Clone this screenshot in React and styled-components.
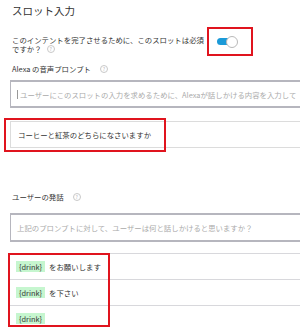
import React from 'react'
import styled, { createGlobalStyle } from 'styled-components'

const GlobalStyle = createGlobalStyle`
  html, body {
    margin: 0;
    padding: 0;
    background: #fff;
    overflow: hidden;
  }
  body {
    font-family: "Noto Sans CJK JP", "Noto Sans", sans-serif;
    color: #333;
  }
`

const Page = styled.div`
  width: 420px;
  padding: 4px 0 0 10px;
  font-size: 7.4px;
`

const Title = styled.h2`
  margin: 0 0 0 2px;
  font-size: 10.5px;
  line-height: 14px;
  font-weight: 400;
  color: #333;
`

const RequiredRow = styled.div`
  display: flex;
  align-items: flex-start;
  margin-top: 9px;
`

const Question = styled.div`
  width: 195px;
  margin: 9px 0 0 2px;
  line-height: 8.5px;
  color: #333;
`

const Frame = styled.div`
  box-sizing: border-box;
  border: 2px solid #e0141e;
`

const ToggleFrame = styled(Frame)`
  width: 46px;
  height: 29px;
  display: flex;
  align-items: center;
  padding-left: 8px;
`

const Toggle = styled.div`
  position: relative;
  width: 21px;
  height: 12px;
  display: flex;
  align-items: center;
`

const Track = styled.div`
  width: 15px;
  height: 7px;
  border-radius: 4px;
  background: #1b9ad8;
`

const Knob = styled.div`
  position: absolute;
  right: 0;
  top: 0;
  box-sizing: border-box;
  width: 12px;
  height: 12px;
  border-radius: 50%;
  background: #fff;
  border: 1px solid #b9b9b9;
`

const Label = styled.div`
  display: flex;
  align-items: center;
  gap: 9px;
  margin: ${p => p.$top}px 0 0 2px;
  line-height: 10px;
  color: #333;
`

const Help = styled.span`
  display: inline-block;
  box-sizing: border-box;
  width: 8px;
  height: 8px;
  margin-left: ${p => p.$gap || 0}px;
  vertical-align: middle;
  border-radius: 50%;
  border: 1px solid #c8c8c8;
  color: #bbb;
  font-size: 5px;
  line-height: 6px;
  text-align: center;
`

const InputBox = styled.div`
  box-sizing: border-box;
  height: ${p => p.$h}px;
  margin-top: ${p => p.$top}px;
  border: 2px solid #b6b6be;
  border-left-width: 1.5px;
  display: flex;
  align-items: center;
  padding-left: 6px;
  white-space: nowrap;
  color: #aaa;
`

const Caret = styled.span`
  display: inline-block;
  width: 1px;
  height: 9px;
  background: #999;
  margin-right: 2px;
`

const Marked = styled.div`
  position: relative;
  margin-top: ${p => p.$top}px;
`

const Overlay = styled(Frame)`
  position: absolute;
  left: ${p => p.$left}px;
  top: ${p => p.$y}px;
  width: ${p => p.$w}px;
  height: ${p => p.$h}px;
`

const PromptRow = styled.div`
  box-sizing: border-box;
  height: 27px;
  border: 1px solid #dcdcdc;
  border-right: none;
  display: flex;
  align-items: center;
  padding-left: 7px;
  color: #333;
`

const UtteranceRow = styled.div`
  box-sizing: border-box;
  height: 26px;
  border-top: 1px solid #d8d8dc;
  display: flex;
  align-items: center;
  gap: 4px;
  padding-left: 6px;
  color: #333;
`

const Slot = styled.span`
  background: #c6f6cf;
  padding: 0 3px;
  line-height: 11px;
  color: #333;
`

const utterances = ['をお願いします', 'を下さい', '']

export default function App() {
  return (
    <Page>
      <GlobalStyle />
      <Title>スロット入力</Title>

      <RequiredRow>
        <Question>
          このインテントを完了させるために、このスロットは必須ですか？
          <Help $gap={5}>?</Help>
        </Question>
        <ToggleFrame>
          <Toggle>
            <Track />
            <Knob />
          </Toggle>
        </ToggleFrame>
      </RequiredRow>

      <Label $top={8}>
        Alexa の音声プロンプト <Help>?</Help>
      </Label>
      <InputBox $h={28} $top={6}>
        <Caret />
        ユーザーにこのスロットの入力を求めるために、Alexaが話しかける内容を入力して
      </InputBox>

      <Marked $top={13}>
        <PromptRow>コーヒーと紅茶のどちらになさいますか</PromptRow>
        <Overlay $left={-6} $y={-3} $w={162} $h={34} />
      </Marked>

      <Label $top={44}>
        ユーザーの発話 <Help>?</Help>
      </Label>
      <InputBox $h={29} $top={11}>
        上記のプロンプトに対して、ユーザーは何と話しかけると思いますか？
      </InputBox>

      <Marked $top={11}>
        {utterances.map((text, i) => (
          <UtteranceRow key={i}>
            <Slot>{'{drink}'}</Slot>
            {text}
          </UtteranceRow>
        ))}
        <Overlay $left={-2} $y={0} $w={102} $h={74} />
      </Marked>
    </Page>
  )
}
